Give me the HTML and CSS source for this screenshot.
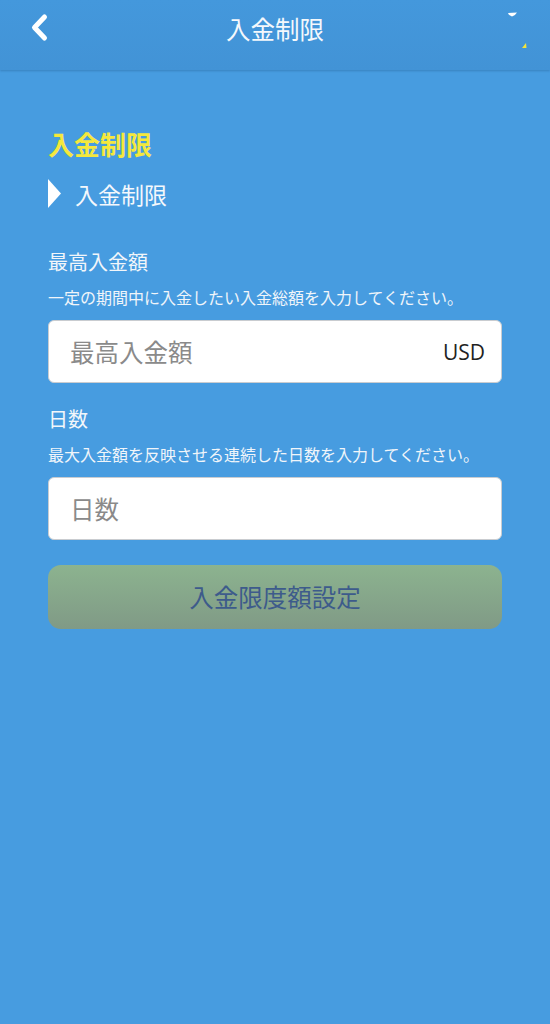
FILE: index.html
```html
<!DOCTYPE html>
<html lang="ja">
<head>
<meta charset="utf-8">
<title>入金制限</title>
<link rel="stylesheet" href="styles.css">
</head>
<body>
<header class="topbar">
  <svg class="back" width="20" height="32" viewBox="0 0 20 32"><path d="M14.5 5 L4.5 15.5 L14.5 26" fill="none" stroke="#fff" stroke-width="5" stroke-linecap="round" stroke-linejoin="round"/></svg>
  <h1 class="topbar-title">入金制限</h1>
  <svg class="marks" width="30" height="40" viewBox="0 0 30 40"><path d="M2 1 L11 0.5 Q9 4 6 4.5 Q3 4 2 1 Z" fill="#fff"/><path d="M16 36 L20 31 L20.5 36 Z" fill="#f3e43a"/></svg>
</header>
<main class="content">
  <h2 class="section-title">入金制限</h2>
  <div class="sub-row">
    <svg class="arrow" width="14" height="30" viewBox="0 0 14 30"><polygon points="0,0 13,14.5 0,29" fill="#fff"/></svg>
    <span class="sub-text">入金制限</span>
  </div>
  <div class="field first">
    <div class="label">最高入金額</div>
    <div class="desc">一定の期間中に入金したい入金総額を入力してください。</div>
    <div class="input-box">
      <input class="input" type="text" placeholder="最高入金額">
      <span class="unit">USD</span>
    </div>
  </div>
  <div class="field">
    <div class="label">日数</div>
    <div class="desc">最大入金額を反映させる連続した日数を入力してください。</div>
    <div class="input-box">
      <input class="input" type="text" placeholder="日数">
    </div>
  </div>
  <button class="submit" type="button">入金限度額設定</button>
</main>
</body>
</html>
```

FILE: styles.css
```css
html, body {
  margin: 0;
  padding: 0;
}
body {
  width: 550px;
  min-height: 1024px;
  background: #479ce0;
  font-family: "Noto Sans CJK JP", "Noto Sans", sans-serif;
  color: #f2f6fa;
}
.topbar {
  position: relative;
  height: 70px;
  box-sizing: border-box;
  padding-top: 14px;
  display: flex;
  align-items: flex-start;
  justify-content: center;
  background: linear-gradient(#4498dc, #4293d6);
  box-shadow: 0 1px 2px rgba(30, 80, 130, 0.35);
}
.back {
  position: absolute;
  left: 30px;
  top: 12px;
}
.marks {
  position: absolute;
  left: 506px;
  top: 12px;
}
.topbar-title {
  margin: 0;
  font-size: 24.5px;
  font-weight: 400;
  line-height: 30px;
  color: #f4f8fc;
}
.content {
  padding: 0 48px;
}
.section-title {
  margin: 59px 0 0;
  font-size: 26px;
  font-weight: 700;
  line-height: 30px;
  color: #f5e83c;
}
.sub-row {
  margin-top: 20px;
  display: flex;
  align-items: center;
  height: 30px;
}
.arrow {
  display: block;
}
.sub-text {
  margin-left: 13px;
  font-size: 23px;
  line-height: 30px;
  color: #f4f8fc;
}
.field {
  margin-top: 22px;
}
.field.first {
  margin-top: 39px;
}
.label {
  font-size: 20px;
  line-height: 28px;
  color: #f2f6fa;
}
.desc {
  margin-top: 10px;
  font-size: 16px;
  line-height: 22px;
  color: #f0f5fa;
  white-space: nowrap;
}
.input-box {
  margin-top: 12px;
  height: 63px;
  box-sizing: border-box;
  background: #fff;
  border: 1px solid #c9ccd0;
  border-radius: 6px;
  display: flex;
  align-items: center;
  padding: 0 16px 0 21px;
}
.input {
  flex: 1;
  min-width: 0;
  border: 0;
  outline: 0;
  background: transparent;
  padding: 0;
  font-family: "Noto Sans CJK JP", "Noto Sans", sans-serif;
  font-size: 24.5px;
  color: #333;
}
.input::placeholder {
  color: #8a8a8a;
}
.unit {
  font-family: "Open Sans", "Noto Sans", sans-serif;
  font-size: 21px;
  color: #222;
}
.submit {
  display: block;
  width: 100%;
  margin-top: 25px;
  height: 64px;
  border: 0;
  border-radius: 13px;
  background: linear-gradient(#8cb38f, #809a86);
  font-family: "Noto Sans CJK JP", "Noto Sans", sans-serif;
  font-size: 24.5px;
  line-height: 60px;
  color: #3d5b8b;
  padding: 0;
}
```
